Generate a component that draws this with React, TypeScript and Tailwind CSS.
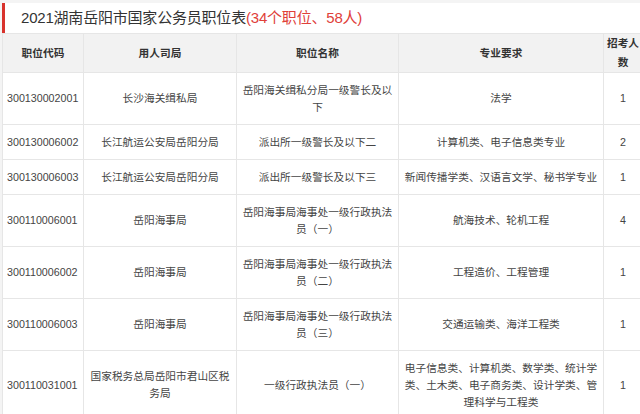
import React from 'react'

type Row = {
  code: string
  unit: string
  post: string
  major: string
  num: string
}

const rows: Row[] = [
  { code: '300130002001', unit: '长沙海关缉私局', post: '岳阳海关缉私分局一级警长及以下', major: '法学', num: '1' },
  { code: '300130006002', unit: '长江航运公安局岳阳分局', post: '派出所一级警长及以下二', major: '计算机类、电子信息类专业', num: '2' },
  { code: '300130006003', unit: '长江航运公安局岳阳分局', post: '派出所一级警长及以下三', major: '新闻传播学类、汉语言文学、秘书学专业', num: '1' },
  { code: '300110006001', unit: '岳阳海事局', post: '岳阳海事局海事处一级行政执法员（一）', major: '航海技术、轮机工程', num: '4' },
  { code: '300110006002', unit: '岳阳海事局', post: '岳阳海事局海事处一级行政执法员（二）', major: '工程造价、工程管理', num: '1' },
  { code: '300110006003', unit: '岳阳海事局', post: '岳阳海事局海事处一级行政执法员（三）', major: '交通运输类、海洋工程类', num: '1' },
  {
    code: '300110031001',
    unit: '国家税务总局岳阳市君山区税务局',
    post: '一级行政执法员（一）',
    major: '电子信息类、计算机类、数学类、统计学类、土木类、电子商务类、设计学类、管理科学与工程类',
    num: '1',
  },
]

const cell = 'border border-[#e6e6e6] px-[3px] py-[8.5px] text-center align-middle'

export default function App() {
  return (
    <div
      className="w-[640px] h-[414px] overflow-hidden bg-[#f4f4f4] pt-[3px] pl-[2px]"
      style={{ fontFamily: '"Liberation Sans", "Noto Sans CJK SC", sans-serif' }}
    >
      {/* title */}
      <div className="h-[30px] bg-white border-l-[3px] border-[#d8322c] pl-[16px] flex items-center text-[15px] text-[#333] tracking-[-0.2px]">
        2021湖南岳阳市国家公务员职位表<span className="text-[#e0403a]">(34个职位、58人)</span>
      </div>

      <table className="table-fixed border-collapse bg-white w-[640px] text-[10.7px] leading-[17px] text-[#444]">
        <colgroup>
          <col className="w-[81px]" />
          <col className="w-[153px]" />
          <col className="w-[162px]" />
          <col className="w-[205px]" />
          <col className="w-[39px]" />
        </colgroup>
        <thead>
          <tr className="bg-[#f2f2f2] h-[39px] text-[#333]">
            <th className="border border-[#e6e6e6] text-center font-bold">职位代码</th>
            <th className="border border-[#e6e6e6] text-center font-bold">用人司局</th>
            <th className="border border-[#e6e6e6] text-center font-bold">职位名称</th>
            <th className="border border-[#e6e6e6] text-center font-bold">专业要求</th>
            <th className="border border-[#e6e6e6] px-[2px] text-center font-bold leading-[19px]">招考人数</th>
          </tr>
        </thead>
        <tbody>
          {rows.map((r) => (
            <tr key={r.code}>
              <td className="border border-[#e6e6e6] px-[4px] py-[8.5px] text-left align-middle">{r.code}</td>
              <td className={cell}>{r.unit}</td>
              <td className={cell}>{r.post}</td>
              <td className={cell}>{r.major}</td>
              <td className="border border-[#e6e6e6] py-[8.5px] text-center align-middle">{r.num}</td>
            </tr>
          ))}
        </tbody>
      </table>
    </div>
  )
}
